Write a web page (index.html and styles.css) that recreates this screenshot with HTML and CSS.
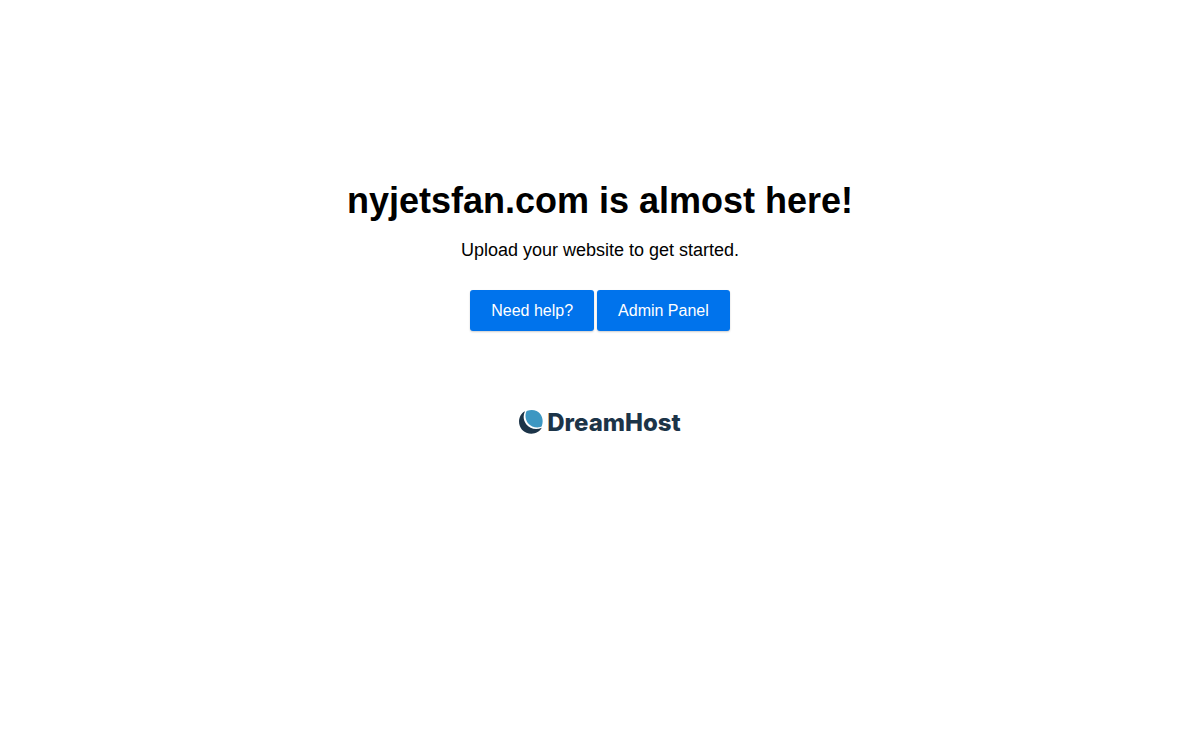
FILE: index.html
```html
<!DOCTYPE html>
<html lang="en">
<head>
  <meta charset="UTF-8" />
  <meta name="viewport" content="width=device-width, initial-scale=1" />
  <title>nyjetsfan.com is almost here!</title>
  <link rel="stylesheet" href="styles.css">
</head>
<body>
  <main class="page">
    <h1>nyjetsfan.com is almost here!</h1>
    <p>Upload your website to get started.</p>

    <div class="btn-group">
      <a class="btn" href="#help">Need help?</a>
      <a class="btn" href="#panel">Admin Panel</a>
    </div>

    <a class="logo" href="#dreamhost">
      <svg class="logo-mark" viewBox="0 0 24 24" aria-hidden="true">
        <path fill="#1c3448" d="M6 1.300 C-0.500 4.500 -2 14 3 19.700 C9 26 19.500 24.500 22.800 17.800 C17 20.300 10.800 18.800 7.200 14.200 C4.100 10.200 4 5.200 6 1.300 Z" />
        <path fill="#3d97c2" d="M8.300 0.800 C13 -0.900 18.500 0.200 21.300 3.900 C23.900 7.200 24.200 11.800 22.900 15.800 Q22.500 16.900 21.400 17.100 C17 18.100 12 16.900 9 13.200 C6.500 10.100 5.900 5.800 7 2.400 Q7.300 1.200 8.300 0.800 Z" />
      </svg>
      <span>DreamHost</span>
    </a>
  </main>
</body>
</html>
```

FILE: styles.css
```css
body {
  font-family: "Liberation Sans", Arial, sans-serif;
  background: #fff;
  color: #000;
  margin: 0;
}
.page {
  display: flex;
  flex-direction: column;
  align-items: center;
  padding: 180px 20px 40px;
  text-align: center;
}
h1 {
  margin: 0;
  font-size: 36px;
  line-height: 42px;
  font-weight: 700;
}
p {
  margin: 14px 0 0;
  font-size: 18px;
  line-height: 28px;
}
.btn-group {
  display: flex;
  flex-wrap: wrap;
  justify-content: center;
  gap: 3px;
  margin-top: 26px;
}
.btn {
  padding: 10px 21px;
  font-size: 16px;
  line-height: 21px;
  color: #fff;
  background: #0073ec;
  border-radius: 3px;
  box-shadow: 0 1px 2px rgb(0 0 0 / 0.2);
  text-decoration: none;
}
.btn:hover {
  background: #0062c9;
}
.logo {
  display: flex;
  align-items: flex-start;
  gap: 4px;
  margin-top: 79px;
  font-family: Inter, sans-serif;
  font-size: 24px;
  line-height: 26px;
  font-weight: 800;
  color: #1c3448;
  text-decoration: none;
}
.logo-mark {
  width: 24px;
  height: 24px;
}
```
